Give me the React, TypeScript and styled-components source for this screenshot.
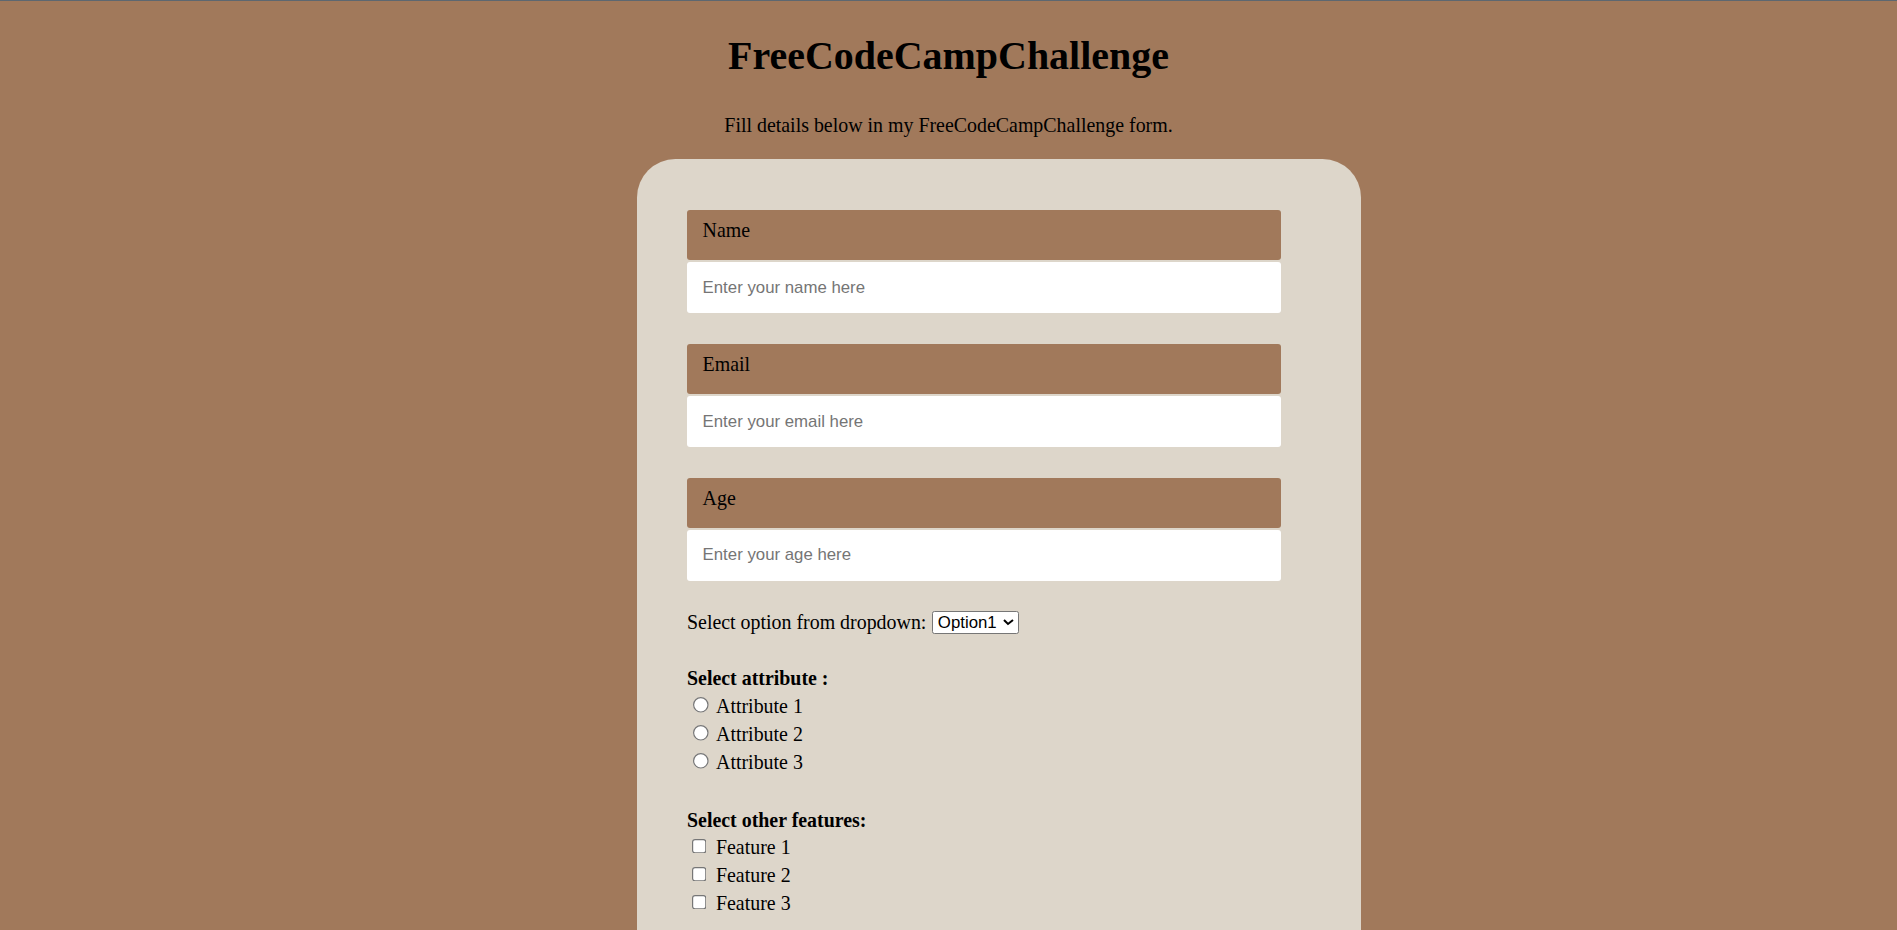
import React from 'react'
import styled, { createGlobalStyle } from 'styled-components'

// the reference is rendered at 120% zoom, so everything below is in 100% px
const GlobalStyle = createGlobalStyle`
  html {
    zoom: 1.2;
    background: #a1795b;
    border-top: 1px solid #5d6770;
  }
  body {
    margin: 0;
    font-family: "Liberation Serif", "Times New Roman", serif;
    font-size: 16.6px;
    color: #000;
  }
`

const Page = styled.div`
  display: flex;
  flex-direction: column;
`

const Title = styled.h1`
  margin: 25.7px 0 27.6px;
  font-size: 33.3px;
  line-height: 40px;
  font-weight: bold;
  text-align: center;
`

const Subtitle = styled.p`
  margin: 0 0 18.2px;
  line-height: 20px;
  text-align: center;
`

const Card = styled.form`
  box-sizing: border-box;
  width: 603.5px;
  margin-left: 531px;
  padding: 42.5px 0 90px 41.5px;
  background: #ddd6ca;
  border-radius: 32px;
`

const Field = styled.div`
  display: flex;
  flex-direction: column;
  gap: 2px;
  margin-bottom: 25.4px;
`

const FieldLabel = styled.label`
  box-sizing: border-box;
  width: 495px;
  height: 41.7px;
  padding: 7.5px 13px 0;
  line-height: 18.4px;
  background: #a1795b;
  border-radius: 2.5px;
`

const TextInput = styled.input`
  box-sizing: border-box;
  width: 495px;
  height: 42.5px;
  padding: 0 13px;
  border: none;
  border-radius: 2.5px;
  background: #fff;
  font-family: "Liberation Sans", Arial, sans-serif;
  font-size: 14px;
  outline: none;
  &::placeholder {
    color: #757575;
  }
`

const DropdownRow = styled.div`
  display: flex;
  align-items: center;
  gap: 4.4px;
  height: 23.2px;
  margin-top: -2px;
`

const Select = styled.select`
  box-sizing: border-box;
  width: 73px;
  height: 19.2px;
  padding: 0 1px;
  border: 1px solid #767676;
  border-radius: 2px;
  background: #fff;
  font-family: "Liberation Sans", Arial, sans-serif;
  font-size: 14px;
`

const Group = styled.div<{ top: number }>`
  margin-top: ${(p) => p.top}px;
`

const GroupTitle = styled.div`
  font-weight: bold;
  line-height: 23.2px;
`

const Choice = styled.label`
  display: block;
  line-height: 23.2px;
`

const fields = [
  { id: 'name', label: 'Name', placeholder: 'Enter your name here' },
  { id: 'email', label: 'Email', placeholder: 'Enter your email here' },
  { id: 'age', label: 'Age', placeholder: 'Enter your age here' },
]

export default function App() {
  return (
    <>
      <GlobalStyle />
      <Page>
        <Title>FreeCodeCampChallenge</Title>
        <Subtitle>Fill details below in my FreeCodeCampChallenge form.</Subtitle>
        <Card onSubmit={(e) => e.preventDefault()}>
          {fields.map((f) => (
            <Field key={f.id}>
              <FieldLabel htmlFor={f.id}>{f.label}</FieldLabel>
              <TextInput id={f.id} type="text" placeholder={f.placeholder} />
            </Field>
          ))}
          <DropdownRow>
            <span>Select option from dropdown:</span>
            <Select defaultValue="Option1">
              <option>Option1</option>
              <option>Option2</option>
              <option>Option3</option>
            </Select>
          </DropdownRow>
          <Group top={23.6}>
            <GroupTitle>Select attribute :</GroupTitle>
            {[1, 2, 3].map((n) => (
              <Choice key={n}>
                <input type="radio" name="attribute" value={n} /> Attribute {n}
              </Choice>
            ))}
          </Group>
          <Group top={25}>
            <GroupTitle>Select other features:</GroupTitle>
            {[1, 2, 3].map((n) => (
              <Choice key={n}>
                <input type="checkbox" value={n} /> Feature {n}
              </Choice>
            ))}
          </Group>
        </Card>
      </Page>
    </>
  )
}
